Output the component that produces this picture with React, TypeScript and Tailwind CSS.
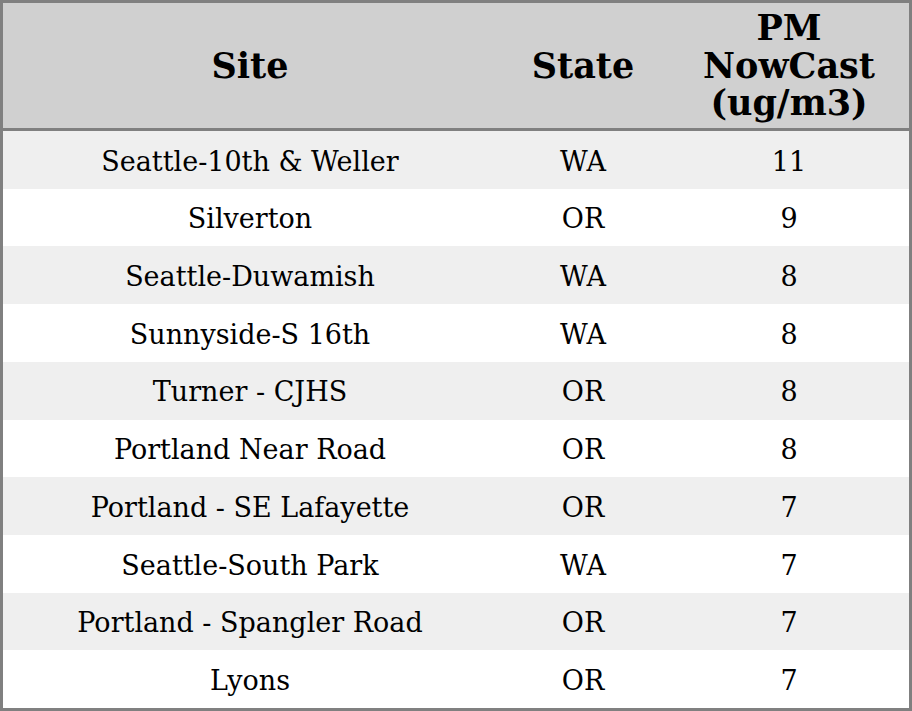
import React from "react";

const rows: [string, string, string][] = [
  ["Seattle-10th & Weller", "WA", "11"],
  ["Silverton", "OR", "9"],
  ["Seattle-Duwamish", "WA", "8"],
  ["Sunnyside-S 16th", "WA", "8"],
  ["Turner - CJHS", "OR", "8"],
  ["Portland Near Road", "OR", "8"],
  ["Portland - SE Lafayette", "OR", "7"],
  ["Seattle-South Park", "WA", "7"],
  ["Portland - Spangler Road", "OR", "7"],
  ["Lyons", "OR", "7"],
];

export default function App() {
  return (
    <div
      className="w-[912px] h-[711px] border-[3px] border-[#808080] bg-white text-black flex flex-col"
      style={{ fontFamily: '"DejaVu Serif", serif' }}
    >
      <div className="grid grid-cols-[494px_172px_1fr] h-[128px] shrink-0 bg-[#d0d0d0] border-b-[3px] border-[#808080] font-bold text-[35px] leading-[37.5px] text-center">
        <div className="flex items-center justify-center">Site</div>
        <div className="flex items-center justify-center">State</div>
        <div className="flex items-center justify-center">
          PM
          <br />
          NowCast
          <br />
          (ug/m3)
        </div>
      </div>
      {rows.map((r, i) => (
        <div
          key={i}
          className={`grid grid-cols-[494px_172px_1fr] flex-1 pt-[4px] text-[27px] text-center items-center ${
            i % 2 === 0 ? "bg-[#efefef]" : "bg-white"
          }`}
        >
          <div>{r[0]}</div>
          <div>{r[1]}</div>
          <div>{r[2]}</div>
        </div>
      ))}
    </div>
  );
}
